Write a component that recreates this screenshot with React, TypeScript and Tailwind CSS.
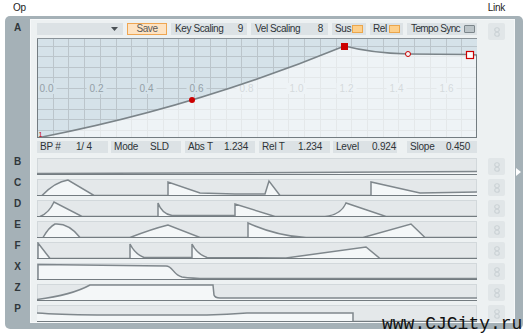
import React from "react";

const W = 440;

const lanes = [
  { id: "B", d: "M0,15.5 L150,15 L440,13.5" },
  {
    id: "C",
    d: "M5,16.5 Q18,3 31,1 L57,16.5 L131,16.5 L131,3 L163,14 L198,15 L228,15 L232,2 L243,16.5 L334,16.5 L334,3 L383,14 L440,13",
  },
  {
    id: "D",
    d: "M3,16.5 Q12,13 17,2 L45,16.5 L121,16.5 L121,3 Q125,14 135,15.5 L198,15.5 L198,4 L238,16.5 L288,16.5 Q304,15 309,3 L349,16.5 L440,16.5",
  },
  {
    id: "E",
    d: "M6,16.5 Q12,6 18,3 Q32,2 43,16.5 L93,16.5 Q115,8 131,4 L163,16.5 L211,16.5 L211,2 Q240,15 269,16.5 L326,16.5 L374,3 L388,16.5 L440,16.5",
  },
  {
    id: "F",
    d: "M1,16.5 L1,1 L13,16.5 L93,16.5 L93,2 Q98,12 107,15.5 L155,15.5 L155,2 Q160,12 170,15.5 L249,16 L329,5 L343,16.5 L440,16.5",
  },
  {
    id: "X",
    d: "M1,16.5 L1,1.5 L129,3 C136,3 136,12 145,14 Q155,15.5 170,15.5 L440,15.5",
  },
  { id: "Z", d: "M0,15.5 Q35,11 53,1 L176,1 L177,11 Q178,14 183,14 L440,14" },
  { id: "P", d: "M0,8 Q20,9.5 60,10 L170,10 Q190,9.5 210,8 L316,8 L316,16.5 L440,16.5" },
];

const status = [
  { label: "BP #", value: "1/ 4", cls: "w-[71px]" },
  { label: "Mode", value: "SLD", cls: "w-[70px] ml-[3px]" },
  { label: "Abs T", value: "1.234", cls: "w-[70px] ml-[4px]" },
  { label: "Rel T", value: "1.234", cls: "w-[71px] ml-[4px]" },
  { label: "Level", value: "0.924", cls: "w-[64px] ml-[3px]" },
  { label: "Slope", value: "0.450", cls: "w-[70px] ml-[10px]" },
];

function LinkBtn() {
  return (
    <div className="flex h-[17px] w-[17px] shrink-0 items-center justify-center rounded-[2px] bg-[#e1e6e8]">
      <svg width="6" height="10" viewBox="0 0 6 10">
        <rect x="0.75" y="0.75" width="4.5" height="4" rx="2" fill="none" stroke="#cbd2d5" strokeWidth="1.2" />
        <rect x="0.75" y="5.25" width="4.5" height="4" rx="2" fill="none" stroke="#cbd2d5" strokeWidth="1.2" />
      </svg>
    </div>
  );
}

function Swatch({ on }: { on: boolean }) {
  return on ? (
    <span className="h-[8px] w-[11px] shrink-0 border border-[#eba64c] bg-[#fdd08c]" />
  ) : (
    <span className="h-[8px] w-[11px] shrink-0 rounded-[1px] border border-[#7c868b] bg-[#bcc5c9]" />
  );
}

function Graph() {
  const vx = Array.from({ length: 28 }, (_, i) => Math.round((i * W) / 28) + 0.5);
  const hy = [8.5, 18.5, 29.5, 39.5, 50.5, 60.5, 71.5, 81.5, 92.5];
  const labels = ["0.0", "0.2", "0.4", "0.6", "0.8", "1.0", "1.2", "1.4", "1.6"];
  const curve = "M0,100 Q156.5,70 307.5,8 Q334,15 371,16 L432,16.5 L440,17";
  return (
    <svg width={W} height="100" className="block">
      <rect width={W} height="100" fill="#d5e2e9" />
      {vx.map((x) => (
        <line key={x} x1={x} y1="0" x2={x} y2="100" stroke="#bbc5cb" strokeWidth="1" />
      ))}
      {hy.map((y) => (
        <line key={y} x1="0" y1={y} x2={W} y2={y} stroke="#bbc5cb" strokeWidth="1" />
      ))}
      {labels.map((l, i) => (
        <g key={l}>
          <rect x={9.5 + i * 50 - 10} y="45" width="20" height="11" fill="#d5e2e9" />
          <text
            x={9.5 + i * 50}
            y="54"
            textAnchor="middle"
            fontSize="10"
            fill="#94a0a7"
            fontFamily="'Liberation Sans',Arial,sans-serif"
          >
            {l}
          </text>
        </g>
      ))}
      <path d={curve + " L440,100 L0,100 Z"} fill="#ffffff" fillOpacity="0.6" />
      <path d={curve} fill="none" stroke="#7b8489" strokeWidth="1.6" />
      <line x1="0.5" y1="0" x2="0.5" y2="100" stroke="#737c81" />
      <line x1="0" y1="0.5" x2={W} y2="0.5" stroke="#8a9399" />
      <line x1="0" y1="99.5" x2={W} y2="99.5" stroke="#737c81" />
      <line x1="439.5" y1="17" x2="439.5" y2="100" stroke="#737c81" />
      <rect x="304" y="5" width="7" height="7" fill="#cc0000" />
      <circle cx="155" cy="62" r="3" fill="#cc0000" />
      <circle cx="371" cy="16" r="2.5" fill="#f4f7f8" stroke="#cc0000" strokeWidth="1" />
      <rect x="429.5" y="13.5" width="7" height="7" fill="#ffffff" stroke="#cc0000" strokeWidth="1.2" />
      <text x="1.5" y="99" fontSize="7" fill="#cc0000" fontFamily="Arial,sans-serif">
        1
      </text>
    </svg>
  );
}

function Lane({ d }: { d: string }) {
  return (
    <svg width={W} height="17" className="block shrink-0">
      <rect x="0.5" y="0.5" width="439" height="16" fill="#e4e8ea" stroke="#d2d8db" />
      <path d={d + " L440,17 L0,17 Z"} fill="#f4f7f8" />
      <path d={d} fill="none" stroke="#7f878c" strokeWidth="1.5" />
      <line x1="0" y1="16.5" x2={W} y2="16.5" stroke="#737b80" />
    </svg>
  );
}

export default function App() {
  return (
    <div className="relative h-[333px] w-[527px] overflow-hidden bg-white font-['Liberation_Sans',Arial,sans-serif] text-[#2e3438]">
      {/* Header */}
      <div className="flex h-[16px] items-start justify-between pl-[13px] pr-[22px] pt-[2px] text-[10px] leading-[12px] tracking-[-0.3px] text-[#222]">
        <span>Op</span>
        <span>Link</span>
      </div>

      {/* Panel */}
      <div className="ml-[5px] flex h-[313px] w-[518px] rounded-[5px] bg-[#a5b1b7] pb-[6px] pt-[3px]">
        {/* Row letters */}
        <div className="flex w-[25px] flex-col items-center text-[10px] font-bold text-[#30373b]">
          <div className="h-[18px] leading-[18px]">A</div>
          <div className="mt-[114px] flex flex-col items-center">
            {lanes.map((l) => (
              <div key={l.id} className="h-[21px] leading-[21px]">
                {l.id}
              </div>
            ))}
          </div>
        </div>

        {/* Content */}
        <div className="flex w-[485px] flex-col border border-[#f6f8f9] bg-[#edf1f2] pl-[6px] pt-[3px]">
          <div className="flex items-start">
            <div className="flex w-[440px] flex-col">
              {/* Top bar */}
              <div className="flex h-[12px] gap-[4px] whitespace-nowrap text-[10px] leading-[12px] tracking-[-0.4px]">
                <div className="flex w-[86px] items-center justify-end bg-[#dce2e5] pr-[5px]">
                  <svg width="7" height="4" viewBox="0 0 7 4">
                    <polygon points="0,0 7,0 3.5,4" fill="#4a5155" />
                  </svg>
                </div>
                <div className="flex w-[40px] items-center justify-center border border-[#efa652] bg-[#fde3c3] text-[#5a5a5a]">
                  Save
                </div>
                <div className="flex w-[76px] justify-between bg-[#dce2e5] pl-[4px] pr-[4px]">
                  <span>Key Scaling</span>
                  <span>9</span>
                </div>
                <div className="flex w-[77px] justify-between bg-[#dce2e5] pl-[4px] pr-[5px]">
                  <span>Vel Scaling</span>
                  <span>8</span>
                </div>
                <div className="flex w-[34px] items-center justify-between bg-[#dce2e5] px-[3px]">
                  <span>Sus</span>
                  <Swatch on />
                </div>
                <div className="flex w-[33px] items-center justify-between bg-[#dce2e5] px-[3px]">
                  <span>Rel</span>
                  <Swatch on />
                </div>
                <div className="flex w-[70px] items-center justify-between bg-[#dce2e5] pl-[4px] pr-[2px]">
                  <span className="tracking-[-0.6px]">Tempo Sync</span>
                  <Swatch on={false} />
                </div>
              </div>

              {/* Envelope graph */}
              <div className="mt-[3px] h-[100px]">
                <Graph />
              </div>

              {/* Breakpoint status */}
              <div className="mt-[3px] flex h-[12px] whitespace-nowrap text-[10px] leading-[12px] tracking-[-0.2px]">
                {status.map((s) => (
                  <div key={s.label} className={`flex bg-[#dce2e5] pl-[3px] ${s.cls}`}>
                    <span className="w-[36px]">{s.label}</span>
                    <span>{s.value}</span>
                  </div>
                ))}
              </div>
            </div>
            <div className="ml-[11px]">
              <LinkBtn />
            </div>
          </div>

          {/* Modulation lanes */}
          <div className="mt-[5px] flex flex-col gap-[4px]">
            {lanes.map((l) => (
              <div key={l.id} className="flex items-start">
                <Lane d={l.d} />
                <div className="ml-[11px]">
                  <LinkBtn />
                </div>
              </div>
            ))}
          </div>
        </div>

        {/* Right strip */}
        <div className="flex-1 pl-[1px] pt-[149px]">
          <svg width="5" height="8" viewBox="0 0 5 8">
            <polygon points="0,0 5,4 0,8" fill="#ffffff" />
          </svg>
        </div>
      </div>

      <div className="absolute left-[382px] top-[315px] font-['Liberation_Mono',monospace] text-[18px] leading-[18px] text-[#111]">
        www.CJCity.ru
      </div>
    </div>
  );
}
